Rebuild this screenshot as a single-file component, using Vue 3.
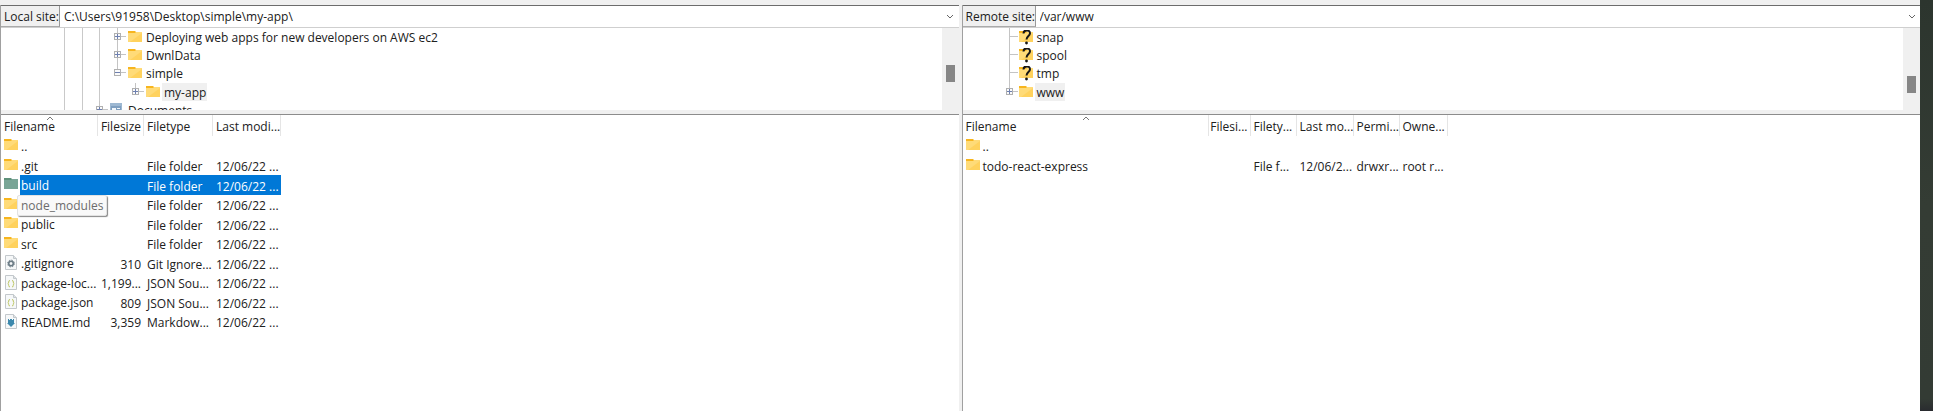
<script setup>
import { ref, h } from 'vue'

const localPath = ref('C:\\Users\\91958\\Desktop\\simple\\my-app\\')
const remotePath = ref('/var/www')

const localTree = [
  { name: 'Deploying web apps for new developers on AWS ec2', icon: 'folder', guides: ['line', 'line', 'line'], node: 'plus', more: true },
  { name: 'DwnlData', icon: 'folder', guides: ['line', 'line', 'line'], node: 'plus', more: true },
  { name: 'simple', icon: 'folder', guides: ['line', 'line', 'line'], node: 'minus' },
  { name: 'my-app', icon: 'folder', guides: ['line', 'line', 'line', 'blank'], node: 'plus', current: true },
  { name: 'Documents', icon: 'documents', guides: ['line', 'line'], node: 'plus', more: true }
]
const remoteTree = [
  { name: 'snap', icon: 'unknown', guides: [], node: 'leaf', more: true },
  { name: 'spool', icon: 'unknown', guides: [], node: 'leaf', more: true },
  { name: 'tmp', icon: 'unknown', guides: [], node: 'leaf', more: true },
  { name: 'www', icon: 'folder', guides: [], node: 'plus', current: true }
]
const date = '12/06/22 ...'
const panes = [
  {
    id: 'local', title: 'Local site:', path: localPath, tree: localTree,
    columns: ['Filename', 'Filesize', 'Filetype', 'Last modi...'],
    rows: [
      { name: '..', icon: 'folder', cells: ['', '', ''] },
      { name: '.git', icon: 'folder', cells: ['', 'File folder', date] },
      { name: 'build', icon: 'selected', cells: ['', 'File folder', date], selected: true },
      { name: 'node_modules', icon: 'folder', cells: ['', 'File folder', date], tip: true },
      { name: 'public', icon: 'folder', cells: ['', 'File folder', date] },
      { name: 'src', icon: 'folder', cells: ['', 'File folder', date] },
      { name: '.gitignore', icon: 'gear', cells: ['310', 'Git Ignore...', date] },
      { name: 'package-loc...', icon: 'json', cells: ['1,199...', 'JSON Sou...', date] },
      { name: 'package.json', icon: 'json', cells: ['809', 'JSON Sou...', date] },
      { name: 'README.md', icon: 'markdown', cells: ['3,359', 'Markdow...', date] }
    ]
  },
  {
    id: 'remote', title: 'Remote site:', path: remotePath, tree: remoteTree,
    columns: ['Filename', 'Filesi...', 'Filety...', 'Last mo...', 'Permi...', 'Owne...'],
    rows: [
      { name: '..', icon: 'folder', cells: ['', '', '', '', ''] },
      { name: 'todo-react-express', icon: 'folder', cells: ['', 'File f...', '12/06/2...', 'drwxr...', 'root r...'] }
    ]
  }
]

const p = (d, fill, extra = {}) => h('path', { d, fill, ...extra })
const page = () => [
  p('M1.5 .5h8l3 3v11h-11z', '#f6f8f9', { stroke: '#c3c8cc' }),
  p('M9.5 .5v3h3', '#dfe3e6', { stroke: '#c3c8cc' })
]
const folder = () => [
  p('M0 1h7l1 1v2H0z', '#f7b51e'),
  p('M0 3h7l1-1h6v10H0z', '#ffdb78'),
  p('M14 3v9H2z', '#ffd057', { opacity: 0.8 })
]
const FileIcon = ({ kind }) => {
  let parts
  if (kind === 'folder') parts = folder()
  else if (kind === 'selected') parts = [p('M0 1h7l1 1v2H0z', '#5f917b'), p('M0 3h7l1-1h6v10H0z', '#79a596')]
  else if (kind === 'unknown') {
    parts = [
      ...folder(),
      p('M4.500 3.500C4.500-.6 11-.6 11 3.200C11 6 7.500 6 7.500 9.500', 'none', { stroke: '#161616', 'stroke-width': 2 }),
      h('circle', { cx: 7.5, cy: 13, r: 1.4, fill: '#161616' })
    ]
  } else if (kind === 'documents') {
    parts = [p('M0 0h12v14H0z', '#9db8d2'), p('M1 3h10v11H1z', '#7f9fc0'), p('M2 5h4v3H2zM7 5h3v1H7zM7 7h3v1H7z', '#f2f7fb')]
  } else if (kind === 'gear') {
    parts = [...page(), h('circle', { cx: 7, cy: 8.5, r: 2.3, fill: 'none', stroke: '#6c7c86', 'stroke-width': 1.6 }),
      h('circle', { cx: 7, cy: 8.5, r: 3.4, fill: 'none', stroke: '#6c7c86', 'stroke-width': 1, 'stroke-dasharray': '1.4 1.27' })]
  } else if (kind === 'json') {
    parts = [...page(), p('M6 5.500q-1.500 0-1.300 1.500q.1 1.500-.9 1.700q1 .2 .9 1.700q-.2 1.500 1.300 1.500M8 5.500q1.500 0 1.300 1.500q-.1 1.500 .9 1.700q-1 .2-.9 1.700q.2 1.500-1.300 1.500', 'none', { stroke: '#bfc766' })]
  } else {
    parts = [...page(), p('M4 5h1v1h1V5h2v1h1V5h1v4h1l-4 4-4-4h1z', '#3d89ad')]
  }
  return h('svg', { class: ['icon', kind], width: 14, height: 15, viewBox: '0 0 14 15', 'aria-hidden': true }, parts)
}
FileIcon.props = ['kind']
</script>

<template>
  <div class="desktop">
    <main class="window">
      <section v-for="pane in panes" :key="pane.id" class="pane" :class="pane.id">
        <div class="site">
          <label :for="pane.id + '-path'">{{ pane.title }}</label>
          <input :id="pane.id + '-path'" v-model="pane.path.value" type="text" spellcheck="false">
          <button type="button" class="drop" aria-label="Recent paths">
            <svg width="8" height="6" viewBox="0 0 8 6"><path d="M1 1l3 3 3-3" fill="none" stroke="#666" /></svg>
          </button>
        </div>

        <div class="tree-box">
          <ul class="tree">
            <li v-for="item in pane.tree" :key="item.name">
              <span v-for="(g, i) in item.guides" :key="i" class="cell" :class="g"></span>
              <span class="cell">
                <svg width="19" height="19" viewBox="0 0 19 19" aria-hidden="true">
                  <path :d="item.more ? 'M9.500 0v19' : 'M9.500 0v9'" stroke="#c4c4c4" />
                  <path d="M9 8.500h10" stroke="#c4c4c4" />
                  <template v-if="item.node !== 'leaf'">
                    <rect x="6.500" y="5.500" width="6" height="6" fill="#fafafa" stroke="#b0b0b0" />
                    <path :d="item.node === 'plus' ? 'M7 8.500h5M9.500 6v5' : 'M7 8.500h5'" stroke="#6e80b0" />
                  </template>
                </svg>
              </span>
              <FileIcon :kind="item.icon" />
              <span class="name" :class="{ current: item.current }">{{ item.name }}</span>
            </li>
          </ul>
          <div class="scroll"><div class="thumb"></div></div>
        </div>

        <div class="list">
          <table>
            <colgroup><col v-for="c in pane.columns" :key="c"></colgroup>
            <thead>
              <tr>
                <th v-for="(c, i) in pane.columns" :key="c" scope="col">
                  <svg v-if="i === 0" class="sort" width="8" height="5" viewBox="0 0 8 5" aria-hidden="true"><path d="M1 4l3-3 3 3" fill="none" stroke="#777" /></svg>
                  <button type="button">{{ c }}</button>
                </th>
              </tr>
            </thead>
            <tbody>
              <tr v-for="row in pane.rows" :key="row.name" :class="{ selected: row.selected }">
                <td>
                  <div class="file">
                    <FileIcon :kind="row.icon" />
                    <span v-if="row.tip" class="tip" role="tooltip">{{ row.name }}</span>
                    <span v-else class="label">{{ row.name }}</span>
                  </div>
                </td>
                <td v-for="(c, i) in row.cells" :key="i">{{ c }}</td>
              </tr>
            </tbody>
          </table>
        </div>
      </section>
    </main>
  </div>
</template>

<style>
body { margin: 0; }
</style>

<style scoped>
.desktop {
  box-sizing: border-box;
  min-height: 100vh;
  padding-right: 13px;
  display: flex;
  background: linear-gradient(#2c352e, #343c34 50%, #333b34 97%, #292b2f);
  font-family: "Open Sans", "Noto Sans", sans-serif;
  font-size: 12px;
  line-height: 18px;
  color: #202020;
}
.window { flex: 1; display: flex; gap: 3px; padding-top: 5px; background: #f0f0f0; }
.pane { flex: 1; min-width: 0; display: flex; flex-direction: column; border-left: 1px solid #a0a0a0; }
input, button { font: inherit; color: inherit; border: 0; padding: 0; margin: 0; background: none; }
.site { display: flex; height: 21px; border-top: 1px solid #6c6c6c; border-bottom: 1px solid #cfcfcf; background: #fff; }
.site label { box-sizing: border-box; width: 59px; padding-left: 3px; line-height: 21px; background: #f0f0f0; border-right: 1px solid #999; border-bottom: 1px solid #aaa; white-space: nowrap; }
.remote .site label { width: 73px; }
.site input { flex: 1; min-width: 0; padding-left: 4px; outline: 0; }
.drop { width: 17px; display: flex; align-items: center; justify-content: center; }
.tree-box { display: flex; height: 82px; background: #fff; overflow: hidden; }
.tree { flex: 1; min-width: 0; margin: 0; padding: 0; list-style: none; }
.tree li { display: flex; height: 18px; padding-left: 54px; white-space: nowrap; }
.tree li:nth-child(3) { height: 19px; }
.remote .tree li { padding-left: 37px; }
.cell { flex: none; width: 18px; height: 100%; overflow: hidden; }
.cell:nth-child(2) { width: 17px; }
.cell svg { display: block; }
.line { background: linear-gradient(#c9c9c9, #c9c9c9) 9px 0 / 1px 100% no-repeat; }
.tree .icon { flex: none; margin: 2px 2px 0; }
.remote .tree .icon { margin-left: 1px; }
.name { padding: 0 1px 0 2px; line-height: 20px; }
.current { background: #f0f0f0; }
.scroll { width: 17px; background: #f0f0f0; }
.thumb { width: 9px; height: 17px; margin: 37px 0 0 4px; background: #868686; }
.remote .thumb { margin-top: 48px; }
.list { flex: 1; margin-top: 4px; border-top: 1px solid #8c8c8c; background: #fff; }
table { table-layout: fixed; border-collapse: collapse; width: 280px; }
.remote table { width: 485px; }
col:nth-child(1) { width: 97px; }
col:nth-child(2) { width: 46px; }
col:nth-child(3) { width: 69px; }
col:nth-child(4) { width: 68px; }
.remote col:nth-child(1) { width: 246px; }
.remote col:nth-child(2) { width: 42px; }
.remote col:nth-child(3) { width: 46px; }
.remote col:nth-child(4) { width: 57px; }
.remote col:nth-child(5) { width: 46px; }
.remote col:nth-child(6) { width: 48px; }
th, td { box-sizing: border-box; white-space: nowrap; text-align: left; }
th { position: relative; height: 21px; padding: 3px 0 0 3px; font-weight: 400; background: linear-gradient(#e5e5e5, #e5e5e5) right / 1px 100% no-repeat; }
th button { display: block; }
.sort { position: absolute; top: 1px; left: 50%; margin-left: -4px; }
td { height: 19px; padding: 2px 0 0 3px; line-height: 17px; }
tbody tr:nth-child(odd) td { height: 20px; }
td:first-child { padding-top: 0; vertical-align: top; }
th:nth-child(2), td:nth-child(2) { padding-left: 0; padding-right: 3px; text-align: right; }
th:nth-child(2) button { margin-left: auto; }
.file { position: relative; display: flex; height: 19px; align-items: flex-start; }
.file .icon { flex: none; margin: 2px 2px 0 0; }
.label { flex: 1; box-sizing: border-box; height: 20px; padding: 1px 0 0 1px; line-height: 20px; }
.selected td { color: #fff; background: #0078d7; }
.selected td:first-child { background: none; }
.selected .label { background: #0078d7; }
.tip { position: absolute; z-index: 1; left: 13px; top: 0; box-sizing: border-box; height: 21px; padding: 0 3px; line-height: 20px; border: 1px solid #e2e2e2; border-radius: 2px; background: #f9f9f9; box-shadow: 1px 1px 1px #888; color: #6c6c6c; }
</style>
